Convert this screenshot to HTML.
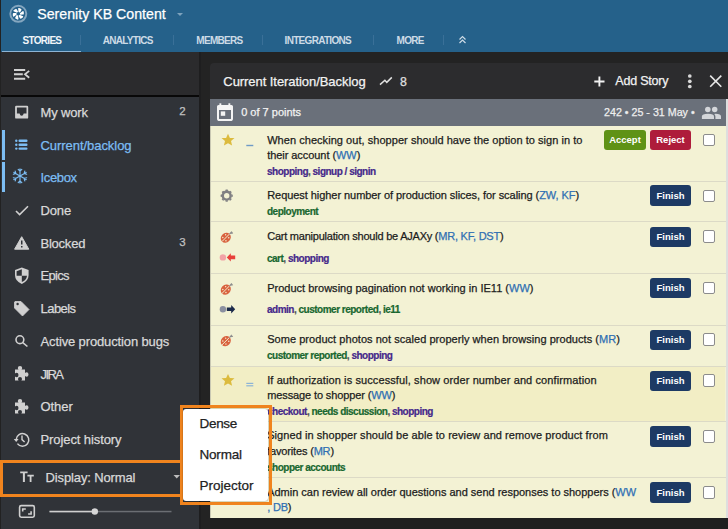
<!DOCTYPE html>
<html><head><meta charset="utf-8"><style>
*{box-sizing:border-box;margin:0;padding:0}
html,body{width:728px;height:529px;overflow:hidden;background:#232323;font-family:"Liberation Sans",sans-serif;position:relative}
.a{position:absolute;white-space:nowrap;line-height:1}
.k{-webkit-text-stroke:0.25px currentColor}
.r{position:absolute}
svg{position:absolute;overflow:visible}
</style></head><body>
<div class="r" style="left:0px;top:0px;width:728px;height:52px;background:#25618a;"></div>
<svg style="left:0;top:0" width="40" height="30" viewBox="0 0 40 30"><circle cx="18.3" cy="13.8" r="8" fill="none" stroke="#84a6bf" stroke-width="1.9"/><g transform="translate(18.3 13.8) rotate(15)"><path d="M-0.2 -1.7 L-1.6 -5.2 Q-1.3 -5.9 -0.5 -5.8 L1.6 -5.3 Q2.2 -5 2.0 -4.3 L1.3 -1.6Z" fill="#fff"/></g><g transform="translate(18.3 13.8) rotate(75)"><path d="M-0.2 -1.7 L-1.6 -5.2 Q-1.3 -5.9 -0.5 -5.8 L1.6 -5.3 Q2.2 -5 2.0 -4.3 L1.3 -1.6Z" fill="#fff"/></g><g transform="translate(18.3 13.8) rotate(135)"><path d="M-0.2 -1.7 L-1.6 -5.2 Q-1.3 -5.9 -0.5 -5.8 L1.6 -5.3 Q2.2 -5 2.0 -4.3 L1.3 -1.6Z" fill="#fff"/></g><g transform="translate(18.3 13.8) rotate(195)"><path d="M-0.2 -1.7 L-1.6 -5.2 Q-1.3 -5.9 -0.5 -5.8 L1.6 -5.3 Q2.2 -5 2.0 -4.3 L1.3 -1.6Z" fill="#fff"/></g><g transform="translate(18.3 13.8) rotate(255)"><path d="M-0.2 -1.7 L-1.6 -5.2 Q-1.3 -5.9 -0.5 -5.8 L1.6 -5.3 Q2.2 -5 2.0 -4.3 L1.3 -1.6Z" fill="#fff"/></g><g transform="translate(18.3 13.8) rotate(315)"><path d="M-0.2 -1.7 L-1.6 -5.2 Q-1.3 -5.9 -0.5 -5.8 L1.6 -5.3 Q2.2 -5 2.0 -4.3 L1.3 -1.6Z" fill="#fff"/></g><circle cx="18.3" cy="13.8" r="1.1" fill="#25618a"/></svg>
<div class="a k" style="left:37.20px;top:7.28px;font-size:14.2px;color:#ffffff;font-weight:400;letter-spacing:0px;">Serenity KB Content</div>
<svg style="left:177px;top:13px" width="6" height="3"><path d="M0 0 L6 0 L3 3Z" fill="#7ea3bd"/></svg>
<div class="a" style="left:22.50px;top:35.83px;font-size:10px;color:#f0f5f9;font-weight:700;letter-spacing:-0.7px;">STORIES</div>
<div class="a" style="left:102.80px;top:35.83px;font-size:10px;color:#cddbe6;font-weight:700;letter-spacing:-0.7px;">ANALYTICS</div>
<div class="a" style="left:196.30px;top:35.83px;font-size:10px;color:#cddbe6;font-weight:700;letter-spacing:-0.7px;">MEMBERS</div>
<div class="a" style="left:284.60px;top:35.83px;font-size:10px;color:#cddbe6;font-weight:700;letter-spacing:-0.7px;">INTEGRATIONS</div>
<div class="a" style="left:396.60px;top:35.83px;font-size:10px;color:#cddbe6;font-weight:700;letter-spacing:-0.7px;">MORE</div>
<div class="r" style="left:80px;top:35px;width:1px;height:10px;background:#3a7098;"></div>
<div class="r" style="left:173px;top:35px;width:1px;height:10px;background:#3a7098;"></div>
<div class="r" style="left:262px;top:35px;width:1px;height:10px;background:#3a7098;"></div>
<div class="r" style="left:373px;top:35px;width:1px;height:10px;background:#3a7098;"></div>
<div class="r" style="left:443px;top:35px;width:1px;height:10px;background:#3a7098;"></div>
<svg style="left:458px;top:35px" width="10" height="10"><path d="M1.5 4.5 L4.5 1.5 L7.5 4.5 M1.5 8 L4.5 5 L7.5 8" fill="none" stroke="#cddbe6" stroke-width="1.2"/></svg>
<div class="r" style="left:2px;top:51px;width:79px;height:2px;background:#8db4d4;"></div>
<div class="r" style="left:0px;top:52px;width:199px;height:43px;background:#2b2b2d;"></div>
<div class="r" style="left:0px;top:94.8px;width:199px;height:2px;background:#080808;"></div>
<div class="r" style="left:0px;top:96.5px;width:199px;height:433px;background:#303338;"></div>
<div class="r" style="left:199px;top:52px;width:2px;height:477px;background:#1e1e1f;"></div>
<svg style="left:0;top:0" width="40" height="100"><g stroke="#d2d2d2" stroke-width="2" fill="none"><path d="M14 70 H25.2 M14 74.3 H22.8 M14 78.7 H25.2"/><path d="M29.2 70.9 L25 74.3 L29.2 77.7" stroke-width="1.8"/></g></svg>
<div class="a k" style="left:40.50px;top:105.90px;font-size:13px;color:#d9d9d9;font-weight:400;letter-spacing:-0.15px;">My work</div>
<div class="a k" style="left:40.50px;top:138.60px;font-size:13px;color:#7cbdf3;font-weight:400;letter-spacing:-0.05px;">Current/backlog</div>
<div class="a k" style="left:40.50px;top:171.30px;font-size:13px;color:#7cbdf3;font-weight:400;letter-spacing:-0.34px;">Icebox</div>
<div class="a k" style="left:40.50px;top:204.00px;font-size:13px;color:#d9d9d9;font-weight:400;letter-spacing:-0.13px;">Done</div>
<div class="a k" style="left:40.50px;top:236.70px;font-size:13px;color:#d9d9d9;font-weight:400;letter-spacing:-0.23px;">Blocked</div>
<div class="a k" style="left:40.50px;top:269.40px;font-size:13px;color:#d9d9d9;font-weight:400;letter-spacing:-0.7px;">Epics</div>
<div class="a k" style="left:40.50px;top:302.10px;font-size:13px;color:#d9d9d9;font-weight:400;letter-spacing:-0.54px;">Labels</div>
<div class="a k" style="left:40.50px;top:334.80px;font-size:13px;color:#d9d9d9;font-weight:400;letter-spacing:-0.13px;">Active production bugs</div>
<div class="a k" style="left:40.50px;top:367.50px;font-size:13px;color:#d9d9d9;font-weight:400;letter-spacing:-1.6px;">JIRA</div>
<div class="a k" style="left:40.50px;top:400.20px;font-size:13px;color:#d9d9d9;font-weight:400;letter-spacing:-0.05px;">Other</div>
<div class="a k" style="left:40.50px;top:432.90px;font-size:13px;color:#d9d9d9;font-weight:400;letter-spacing:-0.09px;">Project history</div>
<div class="a k" style="left:179.20px;top:106.27px;font-size:11.5px;color:#c2c2c2;font-weight:400;letter-spacing:0px;">2</div>
<div class="a k" style="left:179.20px;top:237.27px;font-size:11.5px;color:#c2c2c2;font-weight:400;letter-spacing:0px;">3</div>
<div class="r" style="left:1.5px;top:129.5px;width:3px;height:30px;background:#7cbdf3;"></div>
<div class="r" style="left:1.5px;top:162.3px;width:3px;height:30px;background:#7cbdf3;"></div>
<svg style="left:0;top:0" width="40" height="529"><path d="M16.3 105.7 H27 Q28.2 105.7 28.2 106.9 V117.4 Q28.2 118.6 27 118.6 H16.3 Q15.1 118.6 15.1 117.4 V106.9 Q15.1 105.7 16.3 105.7Z M16.9 107.4 V113.6 H19.6 Q20.1 115.8 21.65 115.8 Q23.2 115.8 23.7 113.6 H26.5 V107.4Z" fill="#d0d0d0" fill-rule="evenodd"/><g fill="#7cbdf3"><circle cx="16.3" cy="140.8" r="1.2"/><circle cx="16.3" cy="144.7" r="1.2"/><circle cx="16.3" cy="148.6" r="1.2"/><rect x="18.5" y="139.6" width="9" height="2.4" rx="1"/><rect x="18.5" y="143.5" width="9" height="2.4" rx="1"/><rect x="18.5" y="147.4" width="9" height="2.4" rx="1"/></g><g stroke="#7cbdf3" stroke-width="1.2" fill="none" stroke-linecap="round"><g transform="rotate(0 20 176)"><path d="M20 176 V168.9 M18.2 169.4 L20 171.2 L21.8 169.4"/></g><g transform="rotate(60 20 176)"><path d="M20 176 V168.9 M18.2 169.4 L20 171.2 L21.8 169.4"/></g><g transform="rotate(120 20 176)"><path d="M20 176 V168.9 M18.2 169.4 L20 171.2 L21.8 169.4"/></g><g transform="rotate(180 20 176)"><path d="M20 176 V168.9 M18.2 169.4 L20 171.2 L21.8 169.4"/></g><g transform="rotate(240 20 176)"><path d="M20 176 V168.9 M18.2 169.4 L20 171.2 L21.8 169.4"/></g><g transform="rotate(300 20 176)"><path d="M20 176 V168.9 M18.2 169.4 L20 171.2 L21.8 169.4"/></g></g><path d="M16 211 L19.6 214.6 L28 206.3" stroke="#d0d0d0" stroke-width="1.6" fill="none"/><path d="M21.7 236.7 L28.8 249.2 H14.6Z" fill="#d0d0d0" stroke="#d0d0d0" stroke-width="1" stroke-linejoin="round"/><rect x="21" y="240.5" width="1.5" height="4" fill="#303338"/><rect x="21" y="246" width="1.5" height="1.5" fill="#303338"/><path d="M21.8 267.4 L28.6 270 V275 Q28.6 281 21.8 284 Q15 281 15 275 V270Z" fill="#d0d0d0"/><path d="M21.8 269.3 V275.7 H16.6 V271.2Z" fill="#303338"/><path d="M21.8 275.7 H27 Q26.6 280 21.8 282.1Z" fill="#303338"/><path d="M15 301.5 H21 L29 309.5 L22.5 316 L14.5 308 V302Z" fill="#d0d0d0" stroke="#d0d0d0" stroke-width="0.8" stroke-linejoin="round"/><circle cx="17.6" cy="304" r="1.2" fill="#303338"/><circle cx="19.9" cy="339.7" r="3.9" stroke="#d0d0d0" stroke-width="1.6" fill="none"/><path d="M22.8 342.6 L27.4 346.5" stroke="#d0d0d0" stroke-width="1.6"/></svg>
<svg style="left:0;top:0" width="40" height="529"><path transform="translate(14 366)" d="M1 3.5 H4.5 Q3.8 2.6 3.8 2 Q3.8 0 6 0 Q8.2 0 8.2 2 Q8.2 2.6 7.5 3.5 H11 V7 Q11.9 6.3 12.5 6.3 Q14.5 6.3 14.5 8.5 Q14.5 10.7 12.5 10.7 Q11.9 10.7 11 10 V14.5 H7.3 Q8 13.6 8 13 Q8 11 6 11 Q4 11 4 13 Q4 13.6 4.7 14.5 H1 V10.5 Q1.8 11.2 2.5 11.2 Q4.5 11.2 4.5 9 Q4.5 6.8 2.5 6.8 Q1.8 6.8 1 7.5Z" fill="#d0d0d0"/><path transform="translate(14 399)" d="M1 3.5 H4.5 Q3.8 2.6 3.8 2 Q3.8 0 6 0 Q8.2 0 8.2 2 Q8.2 2.6 7.5 3.5 H11 V7 Q11.9 6.3 12.5 6.3 Q14.5 6.3 14.5 8.5 Q14.5 10.7 12.5 10.7 Q11.9 10.7 11 10 V14.5 H7.3 Q8 13.6 8 13 Q8 11 6 11 Q4 11 4 13 Q4 13.6 4.7 14.5 H1 V10.5 Q1.8 11.2 2.5 11.2 Q4.5 11.2 4.5 9 Q4.5 6.8 2.5 6.8 Q1.8 6.8 1 7.5Z" fill="#d0d0d0"/><path d="M16.2 439.5 A6.3 6.3 0 1 1 17.4 443.6" stroke="#d0d0d0" stroke-width="1.5" fill="none"/><path d="M13.8 439 L16.2 442 L18.6 439Z" fill="#d0d0d0"/><path d="M22 435.6 V439.6 L24.6 442" stroke="#d0d0d0" stroke-width="1.4" fill="none"/></svg>
<div class="r" style="left:0px;top:0px;width:1.3px;height:529px;background:#222222;"></div>
<div class="r" style="left:0px;top:460.2px;width:183px;height:36.8px;background:transparent;border:3.2px solid #f0841e;"></div>
<svg style="left:0;top:0" width="200" height="529"><path d="M20.2 471.4 H27.6 V473.3 H24.9 V482.1 H22.9 V473.3 H20.2Z M27.4 474.8 H33.8 V476.4 H31.5 V482.1 H29.7 V476.4 H27.4Z" fill="#d0d0d0"/><path d="M173.5 475 H180 L176.75 478.5Z" fill="#bdbdbd"/><rect x="19.6" y="505.6" width="14.7" height="11.6" rx="1.6" fill="none" stroke="#d0d0d0" stroke-width="1.6"/><path d="M21.9 508.2 H25.8 V509.8 H23.5 V511.6 H21.9Z M31.9 514.8 H28.1 V513.2 H30.3 V511.2 H31.9Z" fill="#d0d0d0"/><rect x="49.5" y="510.8" width="122" height="1.5" fill="#6b6e73"/><rect x="49.5" y="510.8" width="45" height="1.5" fill="#cfcfcf"/><circle cx="94.8" cy="511.5" r="3.2" fill="#d6d6d6"/></svg>
<div class="a k" style="left:45.60px;top:470.80px;font-size:13px;color:#d9d9d9;font-weight:400;letter-spacing:-0.14px;">Display: Normal</div>
<div class="r" style="left:210px;top:63px;width:518px;height:36px;background:#2c2c2e;border-radius:4px 0 0 0;"></div>
<div class="a k" style="left:223.30px;top:74.60px;font-size:13px;color:#f2f2f2;font-weight:400;letter-spacing:-0.06px;">Current Iteration/Backlog</div>
<svg style="left:378px;top:76px" width="16" height="12"><path d="M2 8.6 L6.9 4.2 L8.8 6.4 L13.8 1.4" stroke="#e0e0e0" stroke-width="1.5" fill="none"/></svg>
<div class="a k" style="left:399.90px;top:75.59px;font-size:12.3px;color:#e0e0e0;font-weight:400;letter-spacing:0px;">8</div>
<svg style="left:0;top:0" width="728" height="100"><path d="M599.4 76.5 V86.5 M594.3 81.5 H604.5" stroke="#f2f2f2" stroke-width="1.9"/><circle cx="689.8" cy="76" r="1.85" fill="#d8d8d8"/><circle cx="689.8" cy="81.3" r="1.85" fill="#d8d8d8"/><circle cx="689.8" cy="86.5" r="1.85" fill="#d8d8d8"/><path d="M710.2 75.6 L721.3 86.7 M721.3 75.6 L710.2 86.7" stroke="#e6e6e6" stroke-width="1.6"/></svg>
<div class="a k" style="left:615.30px;top:75.22px;font-size:12.5px;color:#f2f2f2;font-weight:400;letter-spacing:-0.2px;">Add Story</div>
<div class="r" style="left:210px;top:98.8px;width:518px;height:27.2px;background:#6a707a;"></div>
<svg style="left:0;top:0" width="728" height="130"><rect x="218" y="106" width="14" height="14" rx="1.6" fill="none" stroke="#f4f4f4" stroke-width="2"/><rect x="217.2" y="105.2" width="15.6" height="4.8" rx="1" fill="#f4f4f4"/><rect x="219.4" y="103.3" width="1.9" height="3" fill="#f4f4f4"/><rect x="228.4" y="103.3" width="1.9" height="3" fill="#f4f4f4"/><rect x="220.8" y="111.4" width="4.4" height="4.4" fill="#f4f4f4"/><g fill="#d4d6da"><circle cx="707.8" cy="109.6" r="2.75"/><circle cx="714.7" cy="109.6" r="2.75"/><path d="M701.9 118.9 V116.6 Q701.9 113.8 708 113.8 Q714 113.8 714 116.6 V118.9Z"/><path d="M715.4 118.9 V116.6 Q715.4 114.9 714.3 113.95 Q715 113.8 715.6 113.8 Q721 113.8 721 116.6 V118.9Z"/></g></svg>
<div class="a k" style="left:241.20px;top:106.99px;font-size:11px;color:#f2f2f2;font-weight:400;letter-spacing:0px;">0 of 7 points</div>
<div class="a k" style="left:604.00px;top:107.44px;font-size:10.7px;color:#eeeeee;font-weight:400;letter-spacing:0px;">242 &bull; 25 - 31 May &bull;</div>
<div class="r" style="left:726px;top:98.8px;width:2px;height:419.5px;background:#dedede;"></div>
<div class="r" style="left:210px;top:126px;width:515.5px;height:392px;background:#f3f2d4;"></div>
<div class="r" style="left:210px;top:126px;width:1.2px;height:392px;background:#c9c8b3;"></div>
<div class="r" style="left:211.2px;top:366.8px;width:514.3px;height:54.5px;background:#f2eec5;"></div>
<div class="r" style="left:211px;top:180.8px;width:514.5px;height:1.2px;background:#dcdac6;"></div>
<div class="r" style="left:211px;top:221.2px;width:514.5px;height:1.2px;background:#dcdac6;"></div>
<div class="r" style="left:211px;top:273.3px;width:514.5px;height:1.2px;background:#dcdac6;"></div>
<div class="r" style="left:211px;top:324.8px;width:514.5px;height:1.2px;background:#dcdac6;"></div>
<div class="r" style="left:211px;top:365.8px;width:514.5px;height:1.2px;background:#dcdac6;"></div>
<div class="r" style="left:211px;top:420.8px;width:514.5px;height:1.2px;background:#dcdac6;"></div>
<div class="r" style="left:211px;top:476.8px;width:514.5px;height:1.2px;background:#dcdac6;"></div>
<div class="r" style="left:210px;top:518px;width:518px;height:11px;background:#1f1f1f;"></div>
<div class="a k" style="left:267.20px;top:134.99px;font-size:11px;color:#1c1c1c;font-weight:400;letter-spacing:0.045px;">When checking out, shopper should have the option to sign in to</div>
<div class="a k" style="left:267.20px;top:150.19px;font-size:11px;color:#1c1c1c;font-weight:400;letter-spacing:-0.059px;">their account (<span style="color:#2f6fb3">WW</span>)</div>
<div class="a" style="left:267.00px;top:166.94px;font-size:10px;color:#555;font-weight:700;letter-spacing:-0.5px;-webkit-text-stroke:0.2px currentColor;"><span style="color:#45288a">shopping</span><span style="color:#555">, </span><span style="color:#45288a">signup / signin</span></div>
<div class="a k" style="left:267.20px;top:190.39px;font-size:11px;color:#1c1c1c;font-weight:400;letter-spacing:-0.056px;">Request higher number of production slices, for scaling (<span style="color:#2f6fb3">ZW, KF</span>)</div>
<div class="a" style="left:267.00px;top:207.33px;font-size:10px;color:#555;font-weight:700;letter-spacing:-0.5px;-webkit-text-stroke:0.2px currentColor;"><span style="color:#18672f">deployment</span></div>
<div class="a k" style="left:267.20px;top:231.19px;font-size:11px;color:#1c1c1c;font-weight:400;letter-spacing:-0.23px;">Cart manipulation should be AJAXy (<span style="color:#2f6fb3">MR, KF, DST</span>)</div>
<div class="a" style="left:267.00px;top:253.53px;font-size:10px;color:#555;font-weight:700;letter-spacing:-0.5px;-webkit-text-stroke:0.2px currentColor;"><span style="color:#18672f">cart</span><span style="color:#555">, </span><span style="color:#45288a">shopping</span></div>
<div class="a k" style="left:267.20px;top:282.69px;font-size:11px;color:#1c1c1c;font-weight:400;letter-spacing:0.01px;">Product browsing pagination not working in IE11 (<span style="color:#2f6fb3">WW</span>)</div>
<div class="a" style="left:267.00px;top:305.44px;font-size:10px;color:#555;font-weight:700;letter-spacing:-0.5px;-webkit-text-stroke:0.2px currentColor;"><span style="color:#45288a">admin</span><span style="color:#555">, </span><span style="color:#18672f">customer reported</span><span style="color:#555">, </span><span style="color:#18672f">ie11</span></div>
<div class="a k" style="left:267.20px;top:334.39px;font-size:11px;color:#1c1c1c;font-weight:400;letter-spacing:0.045px;">Some product photos not scaled properly when browsing products (<span style="color:#2f6fb3">MR</span>)</div>
<div class="a" style="left:267.00px;top:350.94px;font-size:10px;color:#555;font-weight:700;letter-spacing:-0.5px;-webkit-text-stroke:0.2px currentColor;"><span style="color:#18672f">customer reported</span><span style="color:#555">, </span><span style="color:#45288a">shopping</span></div>
<div class="a k" style="left:267.20px;top:374.69px;font-size:11px;color:#1c1c1c;font-weight:400;letter-spacing:0.1px;">If authorization is successful, show order number and confirmation</div>
<div class="a k" style="left:267.20px;top:389.89px;font-size:11px;color:#1c1c1c;font-weight:400;letter-spacing:-0.114px;">message to shopper (<span style="color:#2f6fb3">WW</span>)</div>
<div class="a" style="left:267.00px;top:406.74px;font-size:10px;color:#555;font-weight:700;letter-spacing:-0.5px;-webkit-text-stroke:0.2px currentColor;"><span style="color:#45288a">checkout</span><span style="color:#555">, </span><span style="color:#18672f">needs discussion</span><span style="color:#555">, </span><span style="color:#45288a">shopping</span></div>
<div class="a k" style="left:267.20px;top:430.29px;font-size:11px;color:#1c1c1c;font-weight:400;letter-spacing:0.066px;">Signed in shopper should be able to review and remove product from</div>
<div class="a k" style="left:267.20px;top:445.89px;font-size:11px;color:#1c1c1c;font-weight:400;letter-spacing:-0.169px;">favorites (<span style="color:#2f6fb3">MR</span>)</div>
<div class="a" style="left:267.00px;top:462.64px;font-size:10px;color:#555;font-weight:700;letter-spacing:-0.5px;-webkit-text-stroke:0.2px currentColor;"><span style="color:#18672f">shopper accounts</span></div>
<div class="a k" style="left:267.20px;top:486.59px;font-size:11px;color:#1c1c1c;font-weight:400;letter-spacing:-0.014px;">Admin can review all order questions and send responses to shoppers (<span style="color:#2f6fb3">WW</span></div>
<div class="a k" style="left:267.20px;top:502.09px;font-size:11px;color:#1c1c1c;font-weight:400;letter-spacing:-0.2px;"><span style="color:#2f6fb3">, DB</span>)</div>
<div class="r" style="left:604.1px;top:129.5px;width:41.8px;height:20.5px;background:#5f9216;border-radius:3px"></div>
<div class="a" style="left:625.00px;top:135.16px;font-size:9.5px;color:#ffffff;font-weight:700;letter-spacing:0px;transform:translateX(-50%)">Accept</div>
<div class="r" style="left:649.6px;top:129.5px;width:41.8px;height:20.5px;background:#ae1c3b;border-radius:3px"></div>
<div class="a" style="left:670.50px;top:135.16px;font-size:9.5px;color:#ffffff;font-weight:700;letter-spacing:0px;transform:translateX(-50%)">Reject</div>
<div class="r" style="left:649.6px;top:185.4px;width:41.8px;height:20.5px;background:#1d3a64;border-radius:3px"></div>
<div class="a" style="left:670.50px;top:191.06px;font-size:9.5px;color:#ffffff;font-weight:700;letter-spacing:0px;transform:translateX(-50%)">Finish</div>
<div class="r" style="left:649.6px;top:226.5px;width:41.8px;height:20.5px;background:#1d3a64;border-radius:3px"></div>
<div class="a" style="left:670.50px;top:232.16px;font-size:9.5px;color:#ffffff;font-weight:700;letter-spacing:0px;transform:translateX(-50%)">Finish</div>
<div class="r" style="left:649.6px;top:277.7px;width:41.8px;height:20.5px;background:#1d3a64;border-radius:3px"></div>
<div class="a" style="left:670.50px;top:283.36px;font-size:9.5px;color:#ffffff;font-weight:700;letter-spacing:0px;transform:translateX(-50%)">Finish</div>
<div class="r" style="left:649.6px;top:329.5px;width:41.8px;height:20.5px;background:#1d3a64;border-radius:3px"></div>
<div class="a" style="left:670.50px;top:335.16px;font-size:9.5px;color:#ffffff;font-weight:700;letter-spacing:0px;transform:translateX(-50%)">Finish</div>
<div class="r" style="left:649.6px;top:370.5px;width:41.8px;height:20.5px;background:#1d3a64;border-radius:3px"></div>
<div class="a" style="left:670.50px;top:376.16px;font-size:9.5px;color:#ffffff;font-weight:700;letter-spacing:0px;transform:translateX(-50%)">Finish</div>
<div class="r" style="left:649.6px;top:426.1px;width:41.8px;height:20.5px;background:#1d3a64;border-radius:3px"></div>
<div class="a" style="left:670.50px;top:431.76px;font-size:9.5px;color:#ffffff;font-weight:700;letter-spacing:0px;transform:translateX(-50%)">Finish</div>
<div class="r" style="left:649.6px;top:482px;width:41.8px;height:20.5px;background:#1d3a64;border-radius:3px"></div>
<div class="a" style="left:670.50px;top:487.66px;font-size:9.5px;color:#ffffff;font-weight:700;letter-spacing:0px;transform:translateX(-50%)">Finish</div>
<div class="r" style="left:702.5px;top:133.6px;width:12.5px;height:12.5px;background:#ffffff;border:1px solid #8c8c8c;border-radius:2px;"></div>
<div class="r" style="left:702.5px;top:189.6px;width:12.5px;height:12.5px;background:#ffffff;border:1px solid #8c8c8c;border-radius:2px;"></div>
<div class="r" style="left:702.5px;top:230.4px;width:12.5px;height:12.5px;background:#ffffff;border:1px solid #8c8c8c;border-radius:2px;"></div>
<div class="r" style="left:702.5px;top:281.6px;width:12.5px;height:12.5px;background:#ffffff;border:1px solid #8c8c8c;border-radius:2px;"></div>
<div class="r" style="left:702.5px;top:333.4px;width:12.5px;height:12.5px;background:#ffffff;border:1px solid #8c8c8c;border-radius:2px;"></div>
<div class="r" style="left:702.5px;top:374.4px;width:12.5px;height:12.5px;background:#ffffff;border:1px solid #8c8c8c;border-radius:2px;"></div>
<div class="r" style="left:702.5px;top:430.2px;width:12.5px;height:12.5px;background:#ffffff;border:1px solid #8c8c8c;border-radius:2px;"></div>
<div class="r" style="left:702.5px;top:486px;width:12.5px;height:12.5px;background:#ffffff;border:1px solid #8c8c8c;border-radius:2px;"></div>
<svg style="left:0;top:0" width="728" height="529"><path transform="translate(228 140)" d="M0 -6.3 L1.9 -2.1 L6.5 -1.9 L3 1.1 L4.1 5.6 L0 3.2 L-4.1 5.6 L-3 1.1 L-6.5 -1.9 L-1.9 -2.1Z" fill="#dcbb3e"/><path transform="translate(228 380.2)" d="M0 -6.3 L1.9 -2.1 L6.5 -1.9 L3 1.1 L4.1 5.6 L0 3.2 L-4.1 5.6 L-3 1.1 L-6.5 -1.9 L-1.9 -2.1Z" fill="#dcbb3e"/><rect x="246.3" y="144.8" width="7" height="1.4" fill="#6f9bc6"/><rect x="246.3" y="382.8" width="7" height="1.2" fill="#8cb3d6"/><rect x="246.3" y="385.2" width="7" height="1.2" fill="#8cb3d6"/><g transform="translate(226.7 195.7)"><circle r="3.9" fill="none" stroke="#808083" stroke-width="2.4"/><path d="M-1.4 -4.6 L-1.0 -6.1 H1.0 L1.4 -4.6Z" fill="#808083" transform="rotate(0)"/><path d="M-1.4 -4.6 L-1.0 -6.1 H1.0 L1.4 -4.6Z" fill="#808083" transform="rotate(45)"/><path d="M-1.4 -4.6 L-1.0 -6.1 H1.0 L1.4 -4.6Z" fill="#808083" transform="rotate(90)"/><path d="M-1.4 -4.6 L-1.0 -6.1 H1.0 L1.4 -4.6Z" fill="#808083" transform="rotate(135)"/><path d="M-1.4 -4.6 L-1.0 -6.1 H1.0 L1.4 -4.6Z" fill="#808083" transform="rotate(180)"/><path d="M-1.4 -4.6 L-1.0 -6.1 H1.0 L1.4 -4.6Z" fill="#808083" transform="rotate(225)"/><path d="M-1.4 -4.6 L-1.0 -6.1 H1.0 L1.4 -4.6Z" fill="#808083" transform="rotate(270)"/><path d="M-1.4 -4.6 L-1.0 -6.1 H1.0 L1.4 -4.6Z" fill="#808083" transform="rotate(315)"/></g><g transform="translate(225.8 237.7) rotate(-45)"><ellipse cx="0" cy="0" rx="5.4" ry="4.7" fill="#d9623f"/><path d="M-5.4 0 H5.4" stroke="#f3f2d4" stroke-width="0.9"/><circle cx="-2" cy="-2.2" r="0.7" fill="#f3f2d4"/><circle cx="2" cy="-2.2" r="0.7" fill="#f3f2d4"/><circle cx="-2" cy="2.2" r="0.7" fill="#f3f2d4"/><circle cx="2" cy="2.2" r="0.7" fill="#f3f2d4"/></g><path d="M229.5 234.2 L231.8 231.5 M230.5 233.39999999999998 L233 232.89999999999998" stroke="#8d8d8d" stroke-width="1.1"/><g transform="translate(225.8 289.6) rotate(-45)"><ellipse cx="0" cy="0" rx="5.4" ry="4.7" fill="#d9623f"/><path d="M-5.4 0 H5.4" stroke="#f3f2d4" stroke-width="0.9"/><circle cx="-2" cy="-2.2" r="0.7" fill="#f3f2d4"/><circle cx="2" cy="-2.2" r="0.7" fill="#f3f2d4"/><circle cx="-2" cy="2.2" r="0.7" fill="#f3f2d4"/><circle cx="2" cy="2.2" r="0.7" fill="#f3f2d4"/></g><path d="M229.5 286.1 L231.8 283.40000000000003 M230.5 285.3 L233 284.8" stroke="#8d8d8d" stroke-width="1.1"/><g transform="translate(225.8 341.1) rotate(-45)"><ellipse cx="0" cy="0" rx="5.4" ry="4.7" fill="#d9623f"/><path d="M-5.4 0 H5.4" stroke="#f3f2d4" stroke-width="0.9"/><circle cx="-2" cy="-2.2" r="0.7" fill="#f3f2d4"/><circle cx="2" cy="-2.2" r="0.7" fill="#f3f2d4"/><circle cx="-2" cy="2.2" r="0.7" fill="#f3f2d4"/><circle cx="2" cy="2.2" r="0.7" fill="#f3f2d4"/></g><path d="M229.5 337.6 L231.8 334.90000000000003 M230.5 336.8 L233 336.3" stroke="#8d8d8d" stroke-width="1.1"/><circle cx="222.9" cy="257.4" r="3.2" fill="#f2a2a6"/><path d="M226.8 257.4 L230.8 253.2 V255.6 H235.2 V259.2 H230.8 V261.6Z" fill="#e8403a"/><circle cx="222.9" cy="309.2" r="3.2" fill="#8b90a0"/><path d="M235.2 309.2 L231.2 305 V307.4 H226.8 V311 H231.2 V313.4Z" fill="#1b2a4a"/></svg>
<div class="r" style="left:179.5px;top:405.2px;width:92px;height:99.8px;background:transparent;border:3px solid #f0841e;"></div>
<div class="r" style="left:183px;top:408.6px;width:84.8px;height:92.8px;background:#ffffff;border-radius:3px;box-shadow:0 0 1.5px rgba(0,0,0,0.55)"></div>
<div class="a k" style="left:199.50px;top:417.17px;font-size:13.5px;color:#222;font-weight:400;letter-spacing:-0.3px;">Dense</div>
<div class="a k" style="left:199.50px;top:448.17px;font-size:13.5px;color:#222;font-weight:400;letter-spacing:-0.2px;">Normal</div>
<div class="a k" style="left:199.50px;top:478.87px;font-size:13.5px;color:#222;font-weight:400;letter-spacing:0px;">Projector</div>
</body></html>
